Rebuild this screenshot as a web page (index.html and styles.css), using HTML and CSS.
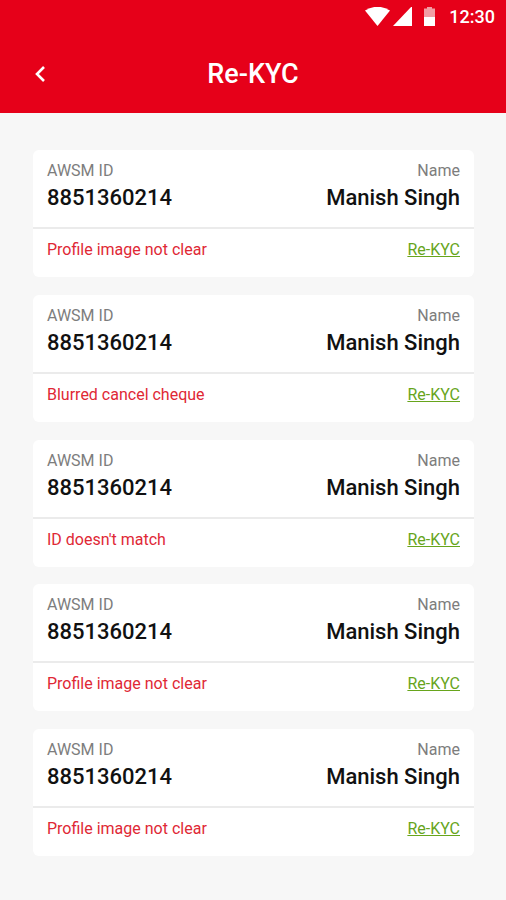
FILE: index.html
```html
<!DOCTYPE html>
<html lang="en">
<head>
<meta charset="utf-8">
<title>Re-KYC</title>
<link rel="stylesheet" href="styles.css">
</head>
<body>
<header class="header">
  <div class="status">
    <svg class="icons" width="76" height="22" viewBox="0 0 76 22">
      <path d="M0 3.5Q12.500 -4 25 3.500L12.500 19Z" fill="#fff"/>
      <path d="M47 -1V19H28Z" fill="#fff"/>
      <path d="M59 1.500h3V0h5v1.500h3V10H59Z" fill="#f29ca4"/>
      <path d="M59 10h11v9H59Z" fill="#fff"/>
    </svg>
    <span class="time">12:30</span>
  </div>
  <div class="bar">
    <svg class="back" width="12" height="18" viewBox="0 0 12 18"><path d="M10 2L3 9l7 7" fill="none" stroke="#fff" stroke-width="2.600"/></svg>
    <h1 class="title">Re-KYC</h1>
  </div>
</header>
<main class="list">
  <section class="card"><div class="info"><div class="labels"><span>AWSM ID</span><span>Name</span></div><div class="values"><span class="number">8851360214</span><span class="name">Manish Singh</span></div></div><div class="foot"><span class="reason">Profile image not clear</span><a class="link">Re-KYC</a></div></section>
  <section class="card"><div class="info"><div class="labels"><span>AWSM ID</span><span>Name</span></div><div class="values"><span class="number">8851360214</span><span class="name">Manish Singh</span></div></div><div class="foot"><span class="reason">Blurred cancel cheque</span><a class="link">Re-KYC</a></div></section>
  <section class="card"><div class="info"><div class="labels"><span>AWSM ID</span><span>Name</span></div><div class="values"><span class="number">8851360214</span><span class="name">Manish Singh</span></div></div><div class="foot"><span class="reason">ID doesn't match</span><a class="link">Re-KYC</a></div></section>
  <section class="card"><div class="info"><div class="labels"><span>AWSM ID</span><span>Name</span></div><div class="values"><span class="number">8851360214</span><span class="name">Manish Singh</span></div></div><div class="foot"><span class="reason">Profile image not clear</span><a class="link">Re-KYC</a></div></section>
  <section class="card"><div class="info"><div class="labels"><span>AWSM ID</span><span>Name</span></div><div class="values"><span class="number">8851360214</span><span class="name">Manish Singh</span></div></div><div class="foot"><span class="reason">Profile image not clear</span><a class="link">Re-KYC</a></div></section>
</main>
</body>
</html>
```
FILE: styles.css
```css
* { box-sizing: border-box; }
body { margin: 0; height: 900px; background: #f7f7f7; font-family: Roboto, sans-serif; overflow: hidden; }
.header { height: 113px; background: #e60019; color: #fff; }
.status { display: flex; justify-content: flex-end; height: 34px; padding: 7px 11px 0 0; }
.icons { margin-right: 8px; }
.time { font-size: 18px; line-height: 20px; font-weight: 500; }
.bar { display: grid; grid-template-columns: 60px 1fr 60px; align-items: center; height: 79px; }
.back { margin-left: 34px; }
.title { margin: 0; font-size: 27px; line-height: 32px; font-weight: 500; text-align: center; }
.list { display: flex; flex-direction: column; gap: 17.800px; padding: 37px 32px 0 33px; }
.card { height: 127px; background: #fff; border-radius: 6px; }
.info { height: 79px; padding: 11px 14px 0; border-bottom: 2px solid #ebebeb; }
.labels, .values, .foot { display: flex; justify-content: space-between; }
.labels { font-size: 16px; line-height: 20px; color: #7d7d7d; }
.values { margin-top: 4px; font-size: 22px; line-height: 26px; font-weight: 500; color: #111; }
.foot { padding: 11px 14px 0; font-size: 16px; line-height: 20px; }
.reason { color: #e02835; }
.link { color: #67a51c; text-decoration: underline; }
```
